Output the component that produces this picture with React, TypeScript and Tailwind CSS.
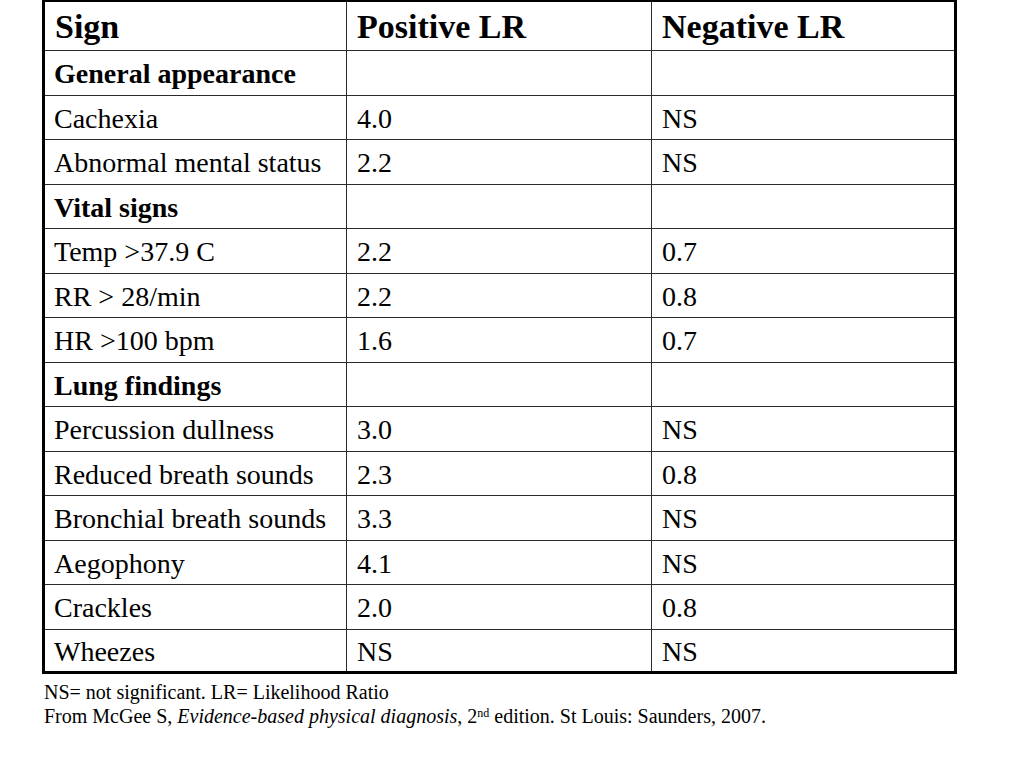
import React from "react";

type Row = { sign: string; pos: string; neg: string; heading?: boolean };

const rows: Row[] = [
  { sign: "General appearance", pos: "", neg: "", heading: true },
  { sign: "Cachexia", pos: "4.0", neg: "NS" },
  { sign: "Abnormal mental status", pos: "2.2", neg: "NS" },
  { sign: "Vital signs", pos: "", neg: "", heading: true },
  { sign: "Temp >37.9 C", pos: "2.2", neg: "0.7" },
  { sign: "RR > 28/min", pos: "2.2", neg: "0.8" },
  { sign: "HR >100 bpm", pos: "1.6", neg: "0.7" },
  { sign: "Lung findings", pos: "", neg: "", heading: true },
  { sign: "Percussion dullness", pos: "3.0", neg: "NS" },
  { sign: "Reduced breath sounds", pos: "2.3", neg: "0.8" },
  { sign: "Bronchial breath sounds", pos: "3.3", neg: "NS" },
  { sign: "Aegophony", pos: "4.1", neg: "NS" },
  { sign: "Crackles", pos: "2.0", neg: "0.8" },
  { sign: "Wheezes", pos: "NS", neg: "NS" },
];

export default function App() {
  return (
    <div className="w-[1024px] h-[768px] bg-white text-black font-['Liberation_Serif','Times_New_Roman',serif] overflow-hidden">
      <div className="ml-[42px] w-[915px] border-[3px] border-t-2 border-black">
        <div className="grid grid-cols-[302px_305px_302px]">
          {["Sign", "Positive LR", "Negative LR"].map((h, i) => (
            <div
              key={h}
              className={`h-[49px] box-border border-b border-[#2a2a2a] flex items-center pl-[10px] pt-[2px] text-[34px] font-bold leading-none ${
                i < 2 ? "border-r" : ""
              }`}
            >
              {h}
            </div>
          ))}
          {rows.map((r, ri) => {
            const last = ri === rows.length - 1;
            const cells = [r.sign, r.pos, r.neg];
            return cells.map((c, ci) => (
              <div
                key={`${ri}-${ci}`}
                className={`${last ? "h-[41px]" : "h-[44.5px] border-b"} box-border border-[#2a2a2a] flex items-center pt-[3px] ${
                  ci === 0 ? "pl-[9px]" : "pl-[10px]"
                } text-[28px] leading-none whitespace-nowrap ${ci < 2 ? "border-r" : ""} ${
                  r.heading && ci === 0 ? "font-bold" : ""
                }`}
              >
                {c}
              </div>
            ));
          })}
        </div>
      </div>
      <div className="mt-[6px] pl-[44px] text-[20px] leading-[24px]">
        <div>NS= not significant. LR= Likelihood Ratio</div>
        <div>
          From McGee S, <i>Evidence-based physical diagnosis</i>, 2
          <sup className="text-[12px]">nd</sup> edition. St Louis: Saunders, 2007.
        </div>
      </div>
    </div>
  );
}
